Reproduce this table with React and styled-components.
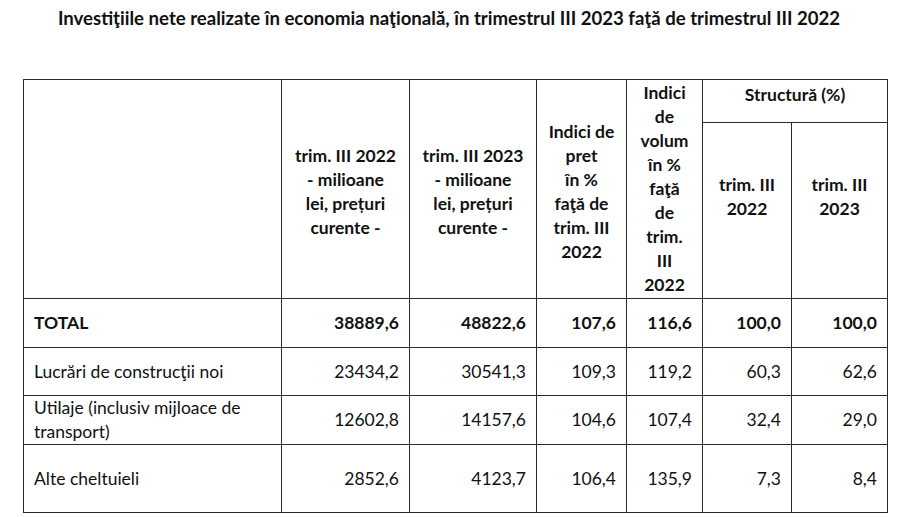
import React from "react";
import styled, { createGlobalStyle } from "styled-components";

const GlobalStyle = createGlobalStyle`
  html, body {
    margin: 0;
    padding: 0;
    background: #ffffff;
  }
  body {
    font-family: Lato, "Liberation Sans", sans-serif;
    color: #111111;
  }
`;

const Page = styled.div`
  width: 900px;
  height: 517px;
  overflow: hidden;
  box-sizing: border-box;
  padding: 8px 13px 0 23px;
`;

const Title = styled.h1`
  margin: 0;
  height: 71px;
  font-size: 18.6px;
  font-weight: 700;
  line-height: 20px;
  text-align: center;
  white-space: nowrap;
  padding-right: 12px;
`;

const Table = styled.table`
  width: 864px;
  border-collapse: collapse;
  table-layout: fixed;
  font-size: 17.5px;
  line-height: 24px;
`;

const HeadCell = styled.th`
  border: 1px solid #2b2b2b;
  font-weight: 700;
  text-align: center;
  vertical-align: middle;
  padding: ${(p) => p.$pad || "6px 4px 0"};
  box-sizing: border-box;
`;

const Cell = styled.td`
  border: 1px solid #2b2b2b;
  text-align: ${(p) => (p.$label ? "left" : "right")};
  font-weight: ${(p) => (p.$bold ? 700 : 400)};
  padding: 0 10px;
  vertical-align: middle;
  white-space: nowrap;
`;

const Row = styled.tr`
  height: ${(p) => p.$h}px;
`;

const widths = [258, 128, 127, 90, 76, 89, 96];

const rows = [
  { label: "TOTAL", bold: true, h: 49, values: ["38889,6", "48822,6", "107,6", "116,6", "100,0", "100,0"] },
  { label: "Lucrări de construcţii noi", h: 48, values: ["23434,2", "30541,3", "109,3", "119,2", "60,3", "62,6"] },
  {
    label: (
      <>
        Utilaje (inclusiv mijloace de
        <br />
        transport)
      </>
    ),
    h: 49,
    values: ["12602,8", "14157,6", "104,6", "107,4", "32,4", "29,0"],
  },
  { label: "Alte cheltuieli", h: 68, values: ["2852,6", "4123,7", "106,4", "135,9", "7,3", "8,4"] },
];

export default function App() {
  return (
    <Page>
      <GlobalStyle />
      <Title>
        Investiţiile nete realizate în economia naţională, în trimestrul III 2023 faţă de trimestrul III 2022
      </Title>
      <Table>
        <colgroup>
          {widths.map((w, i) => (
            <col key={i} style={{ width: w }} />
          ))}
        </colgroup>
        <thead>
          <Row $h={43}>
            <HeadCell rowSpan={2} />
            <HeadCell rowSpan={2}>
              trim. III 2022
              <br />- milioane
              <br />
              lei, prețuri
              <br />
              curente -
            </HeadCell>
            <HeadCell rowSpan={2}>
              trim. III 2023
              <br />- milioane
              <br />
              lei, prețuri
              <br />
              curente -
            </HeadCell>
            <HeadCell rowSpan={2}>
              Indici de
              <br />
              pret
              <br />
              în %
              <br />
              faţă de
              <br />
              trim. III
              <br />
              2022
            </HeadCell>
            <HeadCell rowSpan={2} $pad="0 2px">
              Indici
              <br />
              de
              <br />
              volum
              <br />
              în %
              <br />
              faţă
              <br />
              de
              <br />
              trim.
              <br />
              III
              <br />
              2022
            </HeadCell>
            <HeadCell colSpan={2} $pad="0 4px 12px">
              Structură (%)
            </HeadCell>
          </Row>
          <Row $h={176}>
            <HeadCell $pad="0 4px 28px">
              trim. III
              <br />
              2022
            </HeadCell>
            <HeadCell $pad="0 4px 28px">
              trim. III
              <br />
              2023
            </HeadCell>
          </Row>
        </thead>
        <tbody>
          {rows.map((r, i) => (
            <Row key={i} $h={r.h}>
              <Cell $label $bold={r.bold}>
                {r.label}
              </Cell>
              {r.values.map((v, j) => (
                <Cell key={j} $bold={r.bold}>
                  {v}
                </Cell>
              ))}
            </Row>
          ))}
        </tbody>
      </Table>
    </Page>
  );
}
